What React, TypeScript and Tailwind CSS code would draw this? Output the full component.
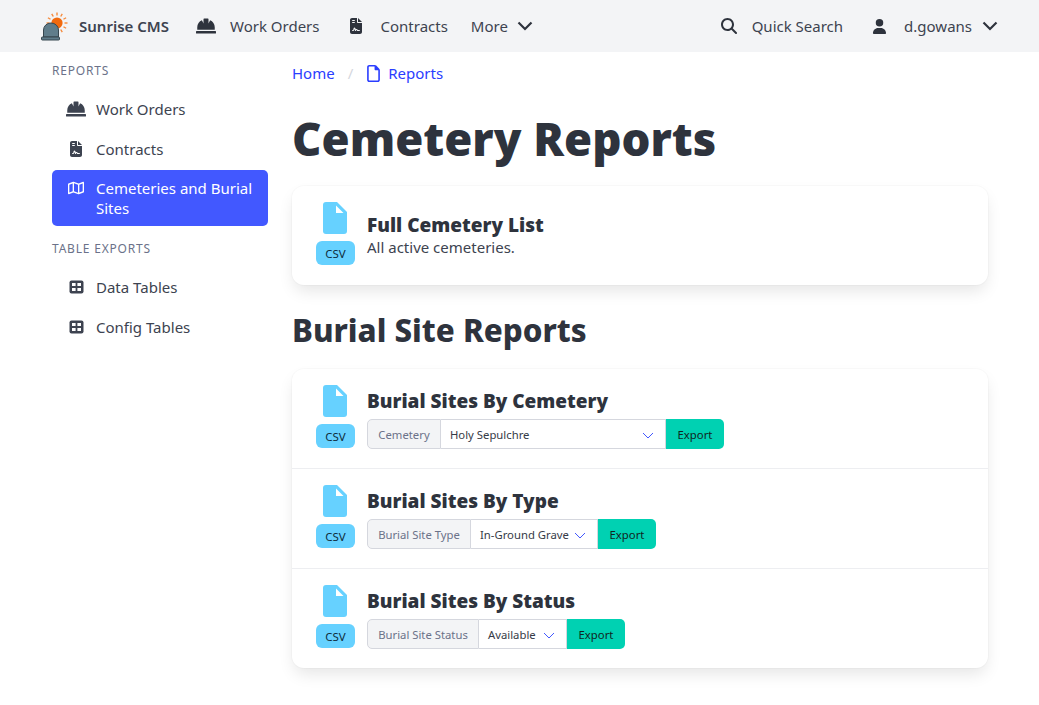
import React from "react";
import { FaHardHat } from "react-icons/fa";
import { FaFileContract, FaMagnifyingGlass, FaUser, FaRegMap, FaRegFile } from "react-icons/fa6";

function Logo() {
  const rays = [];
  for (let i = 0; i < 12; i++) {
    const a = (i * 30 * Math.PI) / 180;
    rays.push(
      <line key={i} x1={17 + Math.cos(a) * 7.5} y1={12 + Math.sin(a) * 7.5} x2={17 + Math.cos(a) * 10.5} y2={12 + Math.sin(a) * 10.5} stroke="#f58a3c" strokeWidth="1.4" />
    );
  }
  return (
    <svg width="28" height="30" viewBox="0 0 28 30" className="shrink-0">
      {rays}
      <circle cx="17" cy="12" r="5.6" fill="#f26a0f" />
      <path d="M3.5 26V19a7.5 7 0 0 1 15 0v7z" fill="#607d8b" stroke="#37474f" strokeWidth="1" />
      <rect x="1.5" y="26" width="18" height="3" rx="0.8" fill="#607d8b" stroke="#37474f" strokeWidth="1" />
    </svg>
  );
}

function Chevron() {
  return (
    <svg width="16" height="10" viewBox="0 0 16 10" fill="none" className="shrink-0 text-[#2e333d]">
      <path d="M1.5 1.5 8 8l6.5-6.5" stroke="currentColor" strokeWidth="2.2" />
    </svg>
  );
}

function SelectArrow() {
  return (
    <svg width="12" height="7" viewBox="0 0 12 7" fill="none" className="shrink-0">
      <path d="M1 1l5 5 5-5" stroke="#4258ff" strokeWidth="1" />
    </svg>
  );
}

function TableIcon() {
  return (
    <svg width="15" height="14" viewBox="0 0 15 14" className="shrink-0">
      <rect x="0.5" y="0.5" width="14" height="13" rx="2" fill="#3d4350" />
      <rect x="3" y="3" width="3.6" height="3" fill="#ffffff" />
      <rect x="8.4" y="3" width="3.6" height="3" fill="#ffffff" />
      <rect x="3" y="8" width="3.6" height="3" fill="#ffffff" />
      <rect x="8.4" y="8" width="3.6" height="3" fill="#ffffff" />
    </svg>
  );
}

function NavItem({ icon, label, gap = "gap-[15px]" }: { icon: React.ReactNode; label: string; gap?: string }) {
  return (
    <div className={`flex items-center ${gap} text-[15px] text-[#3d4350]`}>
      {icon}
      <span>{label}</span>
    </div>
  );
}

function SideItem({ icon, label, active }: { icon: React.ReactNode; label: string; active?: boolean }) {
  return (
    <div className={active ? "flex gap-[12px] rounded-[5px] bg-[#4258ff] py-[8px] pr-[10px] pl-[16px] text-white" : "flex h-[40px] items-center gap-[12px] px-[16px] pb-[2px] text-[#3d4350]"}>
      <span className={active ? "flex h-[20px] w-[16px] shrink-0 items-center justify-center" : "flex w-[16px] shrink-0 items-center justify-center"}>{icon}</span>
      <span className="text-[15px] leading-[20px]">{label}</span>
    </div>
  );
}

function CsvIcon() {
  return (
    <div className="flex w-[39px] shrink-0 flex-col items-center gap-[7px]">
      <svg width="24" height="32" viewBox="0 0 24 32" className="mr-[1px]">
        <path d="M3 0h11l10 10v19a3 3 0 0 1-3 3H3a3 3 0 0 1-3-3V3a3 3 0 0 1 3-3z" fill="#66d1ff" />
        <path d="M13 3.5 20.5 11H13z" fill="#ffffff" />
      </svg>
      <div className="flex h-[24px] w-[39px] items-center justify-center rounded-[6px] bg-[#66d1ff] pt-[1px] text-[11.5px] text-[#0f2d3d]">CSV</div>
    </div>
  );
}

function ExportRow({ title, label, value, labelW, selectW, height, border }: { title: string; label: string; value: string; labelW: string; selectW: string; height: string; border?: boolean }) {
  return (
    <div className={`flex items-start gap-[12px] px-[24px] pt-[16px] ${height} ${border ? "border-b border-[#edeef1]" : ""}`}>
      <CsvIcon />
      <div className="flex flex-col pt-[1px]">
        <h3 className="text-[19px] leading-[30px] font-black text-[#2e333d]">{title}</h3>
        <div className="mt-[3px] flex h-[30px] text-[11.3px]">
          <div className={`flex items-center justify-center rounded-l-[5px] border border-[#d5d7de] bg-[#f3f4f6] pt-[2px] whitespace-nowrap text-[#6b7289] ${labelW}`}>{label}</div>
          <div className={`flex items-center justify-between border-y border-r border-[#d5d7de] bg-white pt-[2px] pr-[11px] pl-[9px] whitespace-nowrap text-[#363b47] ${selectW}`}>
            <span>{value}</span>
            <SelectArrow />
          </div>
          <div className="flex w-[58px] items-center justify-center rounded-r-[5px] bg-[#00d1b2] pt-[2px] text-[#10261f]">Export</div>
        </div>
      </div>
    </div>
  );
}

export default function App() {
  return (
    <div className="min-h-[705px] bg-white text-[15px] text-[#3d4350]" style={{ fontFamily: '"Noto Sans", sans-serif' }}>
      <nav className="flex h-[52px] items-center justify-between bg-[#f3f4f6] pr-[41px] pl-[40px]">
        <div className="flex items-center">
          <div className="flex items-center gap-[11px]">
            <Logo />
            <span className="text-[15px] font-semibold text-[#3d4350]">Sunrise CMS</span>
          </div>
          <div className="ml-[27px]">
            <NavItem icon={<FaHardHat size={20} className="text-[#2e333d]" />} label="Work Orders" gap="gap-[14px]" />
          </div>
          <div className="ml-[28px]">
            <NavItem icon={<FaFileContract size={16} className="text-[#2e333d]" />} label="Contracts" gap="gap-[17px]" />
          </div>
          <div className="ml-[23px] flex items-center gap-[9px]">
            <span>More</span>
            <Chevron />
          </div>
        </div>
        <div className="flex items-center">
          <NavItem icon={<FaMagnifyingGlass size={16} className="text-[#2e333d]" />} label="Quick Search" />
          <div className="ml-[29px] flex items-center">
            <NavItem icon={<FaUser size={15} className="text-[#2e333d]" />} label="d.gowans" gap="gap-[17px]" />
            <div className="ml-[10px]"><Chevron /></div>
          </div>
        </div>
      </nav>
      <div className="flex pr-[51px] pl-[52px]">
        <aside className="w-[216px] shrink-0">
          <div className="flex h-[38px] items-center pb-[1px] text-[12px] tracking-[0.8px] text-[#6b7289]">REPORTS</div>
          <SideItem icon={<FaHardHat size={20} className="shrink-0" />} label="Work Orders" />
          <SideItem icon={<FaFileContract size={16} className="shrink-0" />} label="Contracts" />
          <SideItem icon={<FaRegMap size={16} className="shrink-0" />} label="Cemeteries and Burial Sites" active />
          <div className="flex h-[42px] items-center pt-[3px] text-[12px] tracking-[0.8px] text-[#6b7289]">TABLE EXPORTS</div>
          <SideItem icon={<TableIcon />} label="Data Tables" />
          <SideItem icon={<TableIcon />} label="Config Tables" />
        </aside>
        <main className="ml-[24px] min-w-0 flex-1">
          <div className="flex h-[43px] items-center text-[#2a3dff]">
            <span>Home</span>
            <span className="mr-[12px] ml-[13px] text-[#d5d7de]">/</span>
            <FaRegFile size={17} className="mr-[6px]" />
            <span>Reports</span>
          </div>
          <h1 className="mt-[13px] text-[45.5px] leading-[60px] font-black text-[#2e333d]">Cemetery Reports</h1>
          <div className="mt-[18px] flex h-[99px] items-start gap-[12px] rounded-[12px] bg-white px-[24px] pt-[16px] shadow-[0_8px_16px_-2px_rgba(10,10,10,0.1),0_0_0_1px_rgba(10,10,10,0.02)]">
            <CsvIcon />
            <div className="flex flex-col pt-[8px]">
              <h3 className="text-[19px] leading-[30px] font-black text-[#2e333d]">Full Cemetery List</h3>
              <p className="-mt-[5px] leading-[24px] text-[#3d4350]">All active cemeteries.</p>
            </div>
          </div>
          <h2 className="mt-[24px] text-[31.3px] leading-[42px] font-extrabold text-[#2e333d]">Burial Site Reports</h2>
          <div className="mt-[18px] rounded-[12px] bg-white shadow-[0_8px_16px_-2px_rgba(10,10,10,0.1),0_0_0_1px_rgba(10,10,10,0.02)]">
            <ExportRow title="Burial Sites By Cemetery" label="Cemetery" value="Holy Sepulchre" labelW="w-[74px]" selectW="w-[225px]" height="h-[100px]" border />
            <ExportRow title="Burial Sites By Type" label="Burial Site Type" value="In-Ground Grave" labelW="w-[104px]" selectW="w-[127px]" height="h-[100px]" border />
            <ExportRow title="Burial Sites By Status" label="Burial Site Status" value="Available" labelW="w-[112px]" selectW="w-[88px]" height="h-[99px]" />
          </div>
        </main>
      </div>
    </div>
  );
}
